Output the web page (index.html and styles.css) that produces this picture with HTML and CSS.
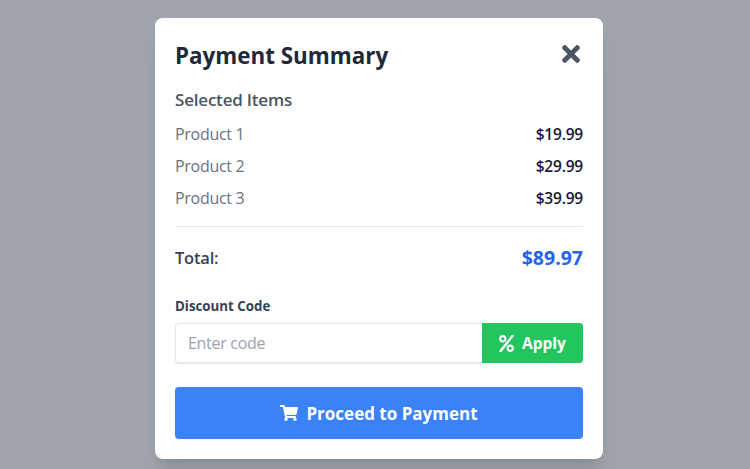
FILE: index.html
```html
<!DOCTYPE html>
<html lang="en">
<head>
    <meta charset="UTF-8">
    <meta name="viewport" content="width=device-width, initial-scale=1.0">
    <title>Payment Summary</title>
    <link rel="stylesheet" href="styles.css">
</head>
<body>
    <div class="overlay">
        <div class="modal">
            <div class="modal-header">
                <h2>Payment Summary</h2>
                <button class="close-btn" type="button" aria-label="Close">
                    <svg viewBox="0 0 352 512" width="18" height="26"><path fill="currentColor" d="M242.72 256l100.07-100.07c12.28-12.28 12.28-32.19 0-44.48l-22.24-22.24c-12.28-12.28-32.19-12.28-44.48 0L176 189.28 75.93 89.21c-12.28-12.28-32.19-12.28-44.48 0L9.21 111.45c-12.28 12.28-12.28 32.19 0 44.48L109.28 256 9.21 356.07c-12.28 12.28-12.28 32.19 0 44.48l22.24 22.24c12.28 12.28 32.2 12.28 44.48 0L176 322.72l100.07 100.07c12.28 12.28 32.2 12.28 44.48 0l22.24-22.24c12.28-12.28 12.28-32.19 0-44.48L242.72 256z"/></svg>
                </button>
            </div>

            <h3 class="items-title">Selected Items</h3>
            <div class="item-row"><span>Product 1</span><strong>$19.99</strong></div>
            <div class="item-row"><span>Product 2</span><strong>$29.99</strong></div>
            <div class="item-row"><span>Product 3</span><strong>$39.99</strong></div>

            <div class="total-row">
                <span>Total:</span>
                <span class="total-price">$89.97</span>
            </div>

            <label class="code-label" for="discountCode">Discount Code</label>
            <div class="code-group">
                <input type="text" id="discountCode" placeholder="Enter code">
                <button class="apply-btn" type="button">
                    <svg viewBox="0 0 448 512" width="15" height="17"><path fill="currentColor" d="M112 224c61.9 0 112-50.1 112-112S173.9 0 112 0 0 50.1 0 112s50.1 112 112 112zm0-160c26.5 0 48 21.5 48 48s-21.5 48-48 48-48-21.5-48-48 21.5-48 48-48zm224 224c-61.9 0-112 50.1-112 112s50.1 112 112 112 112-50.1 112-112-50.1-112-112-112zm0 160c-26.5 0-48-21.5-48-48s21.5-48 48-48 48 21.5 48 48-21.5 48-48 48zM392.3.2l31.6-.1c19.4-.1 30.9 21.8 19.7 37.8L77.4 501.6a23.95 23.95 0 0 1-19.6 10.2l-33.4.1c-19.5 0-30.9-21.9-19.7-37.8l368-463.7C377.2 4 384.5.2 392.3.2z"/></svg>
                    Apply
                </button>
            </div>

            <button class="pay-btn" type="button">
                <svg viewBox="0 0 576 512" width="18" height="16"><path fill="currentColor" d="M528.12 301.319l47.273-208C578.806 78.301 567.391 64 551.99 64H159.208l-9.166-44.81C147.758 8.021 137.93 0 126.529 0H24C10.745 0 0 10.745 0 24v16c0 13.255 10.745 24 24 24h69.883l70.248 343.435C147.325 417.1 136 435.222 136 456c0 30.928 25.072 56 56 56s56-25.072 56-56c0-15.674-6.447-29.835-16.824-40h209.647C430.447 426.165 424 440.326 424 456c0 30.928 25.072 56 56 56s56-25.072 56-56c0-22.172-12.888-41.332-31.579-50.405l5.517-24.276c3.413-15.018-8.002-29.319-23.403-29.319H218.117l-6.545-32h293.145c11.206 0 20.92-7.754 23.403-18.681z"/></svg>
                Proceed to Payment
            </button>
        </div>
    </div>
</body>
</html>
```

FILE: styles.css
```css
* {
    box-sizing: border-box;
}

body {
    margin: 0;
    font-family: "Open Sans", "Noto Sans", sans-serif;
    background-color: #a0a5ad;
}

.overlay {
    height: 469px;
    padding: 18px 0 0 8px;
    display: flex;
    justify-content: center;
    align-items: flex-start;
    overflow: hidden;
}

.modal {
    width: 448px;
    height: 441px;
    padding: 20px;
    background: #fff;
    border-radius: 8px;
    box-shadow: 0 20px 25px -5px rgba(0,0,0,0.1), 0 8px 10px -6px rgba(0,0,0,0.1);
}

.modal-header {
    display: flex;
    justify-content: space-between;
    align-items: center;
    height: 36px;
    margin-bottom: 12px;
}

.modal-header h2 {
    margin: -2px 0 0;
    font-size: 22.4px;
    font-weight: 700;
    color: #1f2937;
}

.close-btn {
    display: flex;
    padding: 0;
    border: none;
    background: none;
    color: #4b5563;
    margin: -5px 3px 0 0;
}

.items-title {
    margin: 0 0 4px;
    height: 28px;
    line-height: 28px;
    font-size: 17px;
    font-weight: 600;
    letter-spacing: -0.2px;
    color: #4b5563;
}

.item-row {
    display: flex;
    justify-content: space-between;
    align-items: center;
    height: 32px;
    font-size: 16px;
    letter-spacing: -0.3px;
    color: #6b7280;
}

.item-row strong {
    font-size: 15.5px;
    font-weight: 600;
    letter-spacing: -0.2px;
    color: #1a1a2e;
}

.total-row {
    display: flex;
    justify-content: space-between;
    align-items: center;
    margin-top: 12px;
    padding-top: 14px;
    height: 47px;
    border-top: 1px solid #e5e7eb;
    font-size: 16.5px;
    font-weight: 600;
    letter-spacing: -0.2px;
    color: #374151;
}

.total-price {
    font-size: 19.5px;
    font-weight: 700;
    letter-spacing: 0;
    color: #2563eb;
}

.code-label {
    display: block;
    margin-top: 23px;
    height: 20px;
    line-height: 20px;
    font-size: 13.3px;
    font-weight: 700;
    color: #374151;
}

.code-group {
    display: flex;
    height: 40px;
    margin-top: 7px;
}

.code-group input {
    flex: 1;
    min-width: 0;
    padding: 0 12px;
    border: 1px solid #e5e7eb;
    border-right: none;
    border-radius: 4px 0 0 4px;
    box-shadow: 0 1px 2px rgba(0,0,0,0.1);
    font: inherit;
    font-size: 16px;
    letter-spacing: -0.3px;
    outline: none;
}

.code-group input::placeholder {
    color: #9ca3af;
}

.apply-btn {
    display: flex;
    align-items: center;
    justify-content: center;
    gap: 8px;
    width: 101px;
    border: none;
    border-radius: 0 4px 4px 0;
    background-color: #22c55e;
    color: #fff;
    font: inherit;
    font-size: 15.5px;
    font-weight: 700;
}

.pay-btn {
    display: flex;
    align-items: center;
    justify-content: center;
    gap: 8px;
    width: 100%;
    height: 52px;
    margin-top: 24px;
    border: none;
    border-radius: 4px;
    background-color: #3b82f6;
    color: #fff;
    font: inherit;
    font-size: 17px;
    font-weight: 700;
}
```
